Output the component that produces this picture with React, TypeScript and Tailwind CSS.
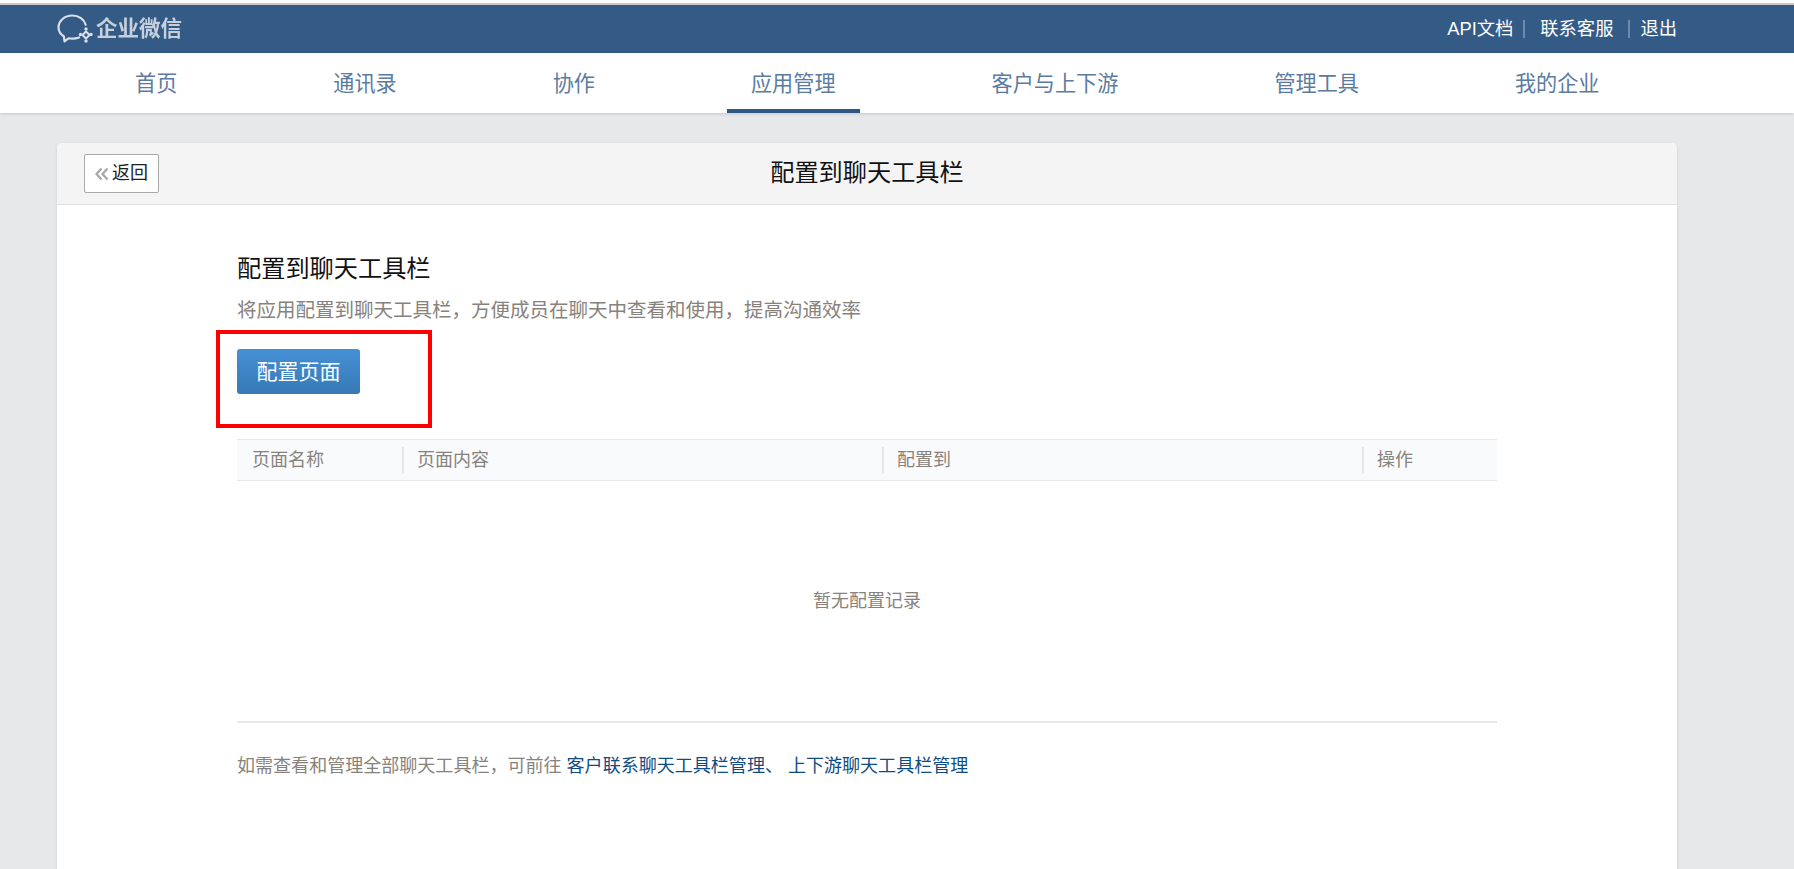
const font = { fontFamily: '"Liberation Sans", "Noto Sans CJK SC", sans-serif' };

const navItems = ["首页", "通讯录", "协作", "应用管理", "客户与上下游", "管理工具", "我的企业"];

function Logo() {
  return (
    <div className="flex items-center">
      <svg width="38" height="32" viewBox="0 0 38 32" fill="none" className="mr-[1px] text-[#d9e0e8]" stroke="currentColor">
        {/* chat bubble */}
        <path
          d="M22 24.5c-2 .8-4.3 1.2-6.7 1.2-1.3 0-2.5-.1-3.7-.4L7.5 28.300l-.6-4.800C3.400 21.300 1.500 18 1.500 14.300 1.500 7.800 7.700 2.500 15.300 2.500c6.500 0 12 3.900 13.400 9.200"
          strokeWidth="2.200"
          strokeLinecap="round"
          strokeLinejoin="round"
        />
        {/* little diamond */}
        <path d="M29 18.500l3.500 3.500-3.500 3.500-3.500-3.500z" strokeWidth="2" strokeLinejoin="round" />
        <circle cx="23.500" cy="21.500" r="1.700" fill="currentColor" stroke="none" />
        <circle cx="34" cy="21.500" r="1.700" fill="currentColor" stroke="none" />
        <circle cx="29" cy="28" r="1.700" fill="currentColor" stroke="none" />
        <circle cx="29" cy="16" r="1.700" fill="currentColor" stroke="none" />
      </svg>
      <span className="pt-[2px] text-[21.500px] font-bold leading-none text-[#c5d0dc] blur-[0.5px]">企业微信</span>
    </div>
  );
}

export default function App() {
  return (
    <div style={font} className="h-[869px] overflow-hidden bg-[#e7e8ea]">
      <div className="h-[3px] bg-white" />
      <div className="h-[2px] bg-[#c9c9c9]" />

      {/* top bar */}
      <div className="flex h-[48px] items-center justify-between bg-[#345a86] pl-[57px] pr-[117px]">
        <Logo />
        <div className="flex items-center text-[18.300px] leading-none text-white">
          <a>API文档</a>
          <span className="ml-[10px] h-[18px] w-[2px] bg-[#6f8bab]" />
          <a className="ml-[15px]">联系客服</a>
          <span className="ml-[15px] h-[18px] w-[2px] bg-[#6f8bab]" />
          <a className="ml-[10px]">退出</a>
        </div>
      </div>

      {/* nav */}
      <div className="relative flex h-[60px] gap-[108px] bg-white pl-[111px] shadow-[0_1px_3px_rgba(0,0,0,0.15)]">
        {navItems.map((item) => (
          <a
            key={item}
            className={
              "flex h-full items-center border-b-[4px] px-6 pt-[6px] text-[21.150px] text-[#5b7ba0] " +
              (item === "应用管理" ? "border-[#2f5783]" : "border-transparent")
            }
          >
            {item}
          </a>
        ))}
      </div>

      {/* card */}
      <div className="mx-[57px] mt-[30px] w-[1620px] rounded-t-[5px] bg-white shadow-[0_1px_3px_rgba(0,0,0,0.12)] pb-[200px]">
        <div className="relative flex h-[62px] items-center justify-center rounded-t-[5px] border-b border-[#dfe1e5] bg-[#f4f4f5]">
          <button className="absolute left-[27px] top-[11px] flex h-[39px] w-[75px] items-center rounded-[2px] border border-[#a9a9a9] bg-white pl-[10px] text-[18px] text-[#222]">
            <svg width="14" height="14" viewBox="0 0 14 14" fill="none" stroke="#a8a8a8" strokeWidth="2.300" className="mr-[3px]">
              <path d="M6.500 1.500 1.500 7l5 5.500M12.500 1.500 7.500 7l5 5.500" />
            </svg>
            返回
          </button>
          <h1 className="text-[24.200px] font-normal text-[#111]">配置到聊天工具栏</h1>
        </div>

        <div className="px-[180px] pt-[46px]">
          <h2 className="text-[24.200px] leading-[36px] text-[#111]">配置到聊天工具栏</h2>
          <p className="mt-[8px] text-[19.500px] leading-[30px] text-[#87827c]">
            将应用配置到聊天工具栏，方便成员在聊天中查看和使用，提高沟通效率
          </p>

          <div className="relative mt-[24px]">
            <button className="flex h-[45px] w-[123px] items-center justify-center rounded-[3px] bg-gradient-to-b from-[#4590d6] to-[#377ab5] text-[21px] text-white">
              配置页面
            </button>
            {/* red annotation box */}
            <div className="absolute left-[-21px] top-[-19px] h-[98px] w-[216px] border-[4px] border-[#fe0000]" />
          </div>

          <div className="mt-[45px] grid h-[42px] grid-cols-[165px_480px_480px_135px] items-center border-y border-[#e6e8ec] bg-[#f9fafc] text-[18px] text-[#87827c]">
            <div className="pl-[15px]">页面名称</div>
            <div className="border-l-2 border-[#e6e7e9] pl-[13px]">页面内容</div>
            <div className="border-l-2 border-[#e6e7e9] pl-[13px]">配置到</div>
            <div className="border-l-2 border-[#e6e7e9] pl-[13px]">操作</div>
          </div>

          <div className="flex h-[242px] items-center justify-center border-b-2 border-[#e8e8e8] pt-[1px] text-[18px] text-[#87827c]">
            暂无配置记录
          </div>

          <p className="mt-[30px] text-[18.050px] leading-[27px] text-[#87827c]">
            如需查看和管理全部聊天工具栏，可前往 <a className="text-[#0f4c81]">客户联系聊天工具栏管理、 上下游聊天工具栏管理</a>
          </p>
        </div>
      </div>
    </div>
  );
}
